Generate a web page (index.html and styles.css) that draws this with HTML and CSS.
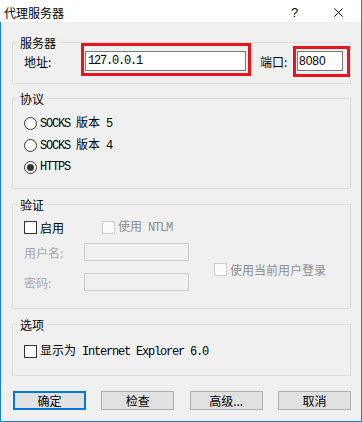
FILE: index.html
```html
<!DOCTYPE html>
<html>
<head>
<meta charset="utf-8">
<title>代理服务器</title>
<link rel="stylesheet" href="styles.css">
</head>
<body>
<div class="win">
  <div class="titlebar">
    <span class="title">代理服务器</span>
    <span class="help">?</span>
    <svg class="close" width="9" height="9" viewBox="0 0 9 9"><path d="M0.5 0.5L8.5 8.5M8.5 0.5L0.5 8.5" stroke="#000" stroke-width="1" fill="none"/></svg>
  </div>
  <div class="main">
    <fieldset class="grp g1">
      <legend>服务器</legend>
      <div class="gbody">
        <div class="row">
          <span class="lbl l-addr">地址:</span>
          <span class="field f-addr"><span class="m">127.0.0.1</span></span>
          <span class="lbl l-port">端口:</span>
          <span class="field f-port"><span class="sans">8080</span></span>
        </div>
      </div>
    </fieldset>

    <fieldset class="grp g2">
      <legend>协议</legend>
      <div class="gbody">
        <div class="opt"><span class="radio"></span><span><span class="m">SOCKS </span>版本<span class="m"> 5</span></span></div>
        <div class="opt"><span class="radio"></span><span><span class="m">SOCKS </span>版本<span class="m"> 4</span></span></div>
        <div class="opt"><span class="radio on"></span><span class="m">HTTPS</span></div>
      </div>
    </fieldset>

    <fieldset class="grp g3">
      <legend>验证</legend>
      <div class="gbody">
        <div class="row1">
          <span class="chk c-en"><span class="box"></span><span>启用</span></span>
          <span class="chk dis"><span class="box"></span><span>使用<span class="m"> NTLM</span></span></span>
        </div>
        <div class="row23">
          <div class="creds">
            <span class="lbl dis">用户名:</span>
            <span class="input dis"></span>
            <span class="lbl dis">密码:</span>
            <span class="input dis"></span>
          </div>
          <span class="chk dis c-cur"><span class="box"></span><span>使用当前用户登录</span></span>
        </div>
      </div>
    </fieldset>

    <fieldset class="grp g4">
      <legend>选项</legend>
      <div class="gbody">
        <div class="row1">
          <span class="chk"><span class="box"></span><span>显示为<span class="m"> Internet Explorer 6.0</span></span></span>
        </div>
      </div>
    </fieldset>

    <div class="btns">
      <span class="btn def">确定</span>
      <span class="btn">检查</span>
      <span class="btn">高级...</span>
      <span class="btn">取消</span>
    </div>
  </div>
</div>
</body>
</html>
```

FILE: styles.css
```css
html, body {
  margin: 0;
  padding: 0;
}
body {
  font-family: "Noto Sans CJK SC", "Noto Sans", sans-serif;
  font-size: 12px;
  line-height: 15px;
  color: #000;
  background: #f0f0f0;
}
.win {
  width: 362px;
  height: 422px;
  display: flex;
  flex-direction: column;
}
.titlebar {
  flex: none;
  height: 22px;
  box-sizing: border-box;
  padding-top: 2px;
  background: #fff;
  border-right: 1px solid #1e7fd6;
  display: flex;
  align-items: center;
}
.title {
  padding-left: 4px;
}
.help {
  margin-left: auto;
  width: 8px;
  margin-right: 35px;
  font-family: "Liberation Sans", sans-serif;
  font-size: 13px;
}
.close {
  display: block;
  margin-right: 18px;
}
.main {
  flex: 1;
  box-sizing: border-box;
  background: #f0f0f0;
  border: 1px solid #1e7fd6;
  border-top: 0;
  padding: 13px 10px 0 11px;
}
.grp {
  margin: 0;
  padding: 0;
  min-width: 0;
  border: 1px solid #dcdcdc;
}
.grp legend {
  margin-left: 4px;
  padding: 0 3px;
  line-height: 15px;
  font-size: 12px;
}
.gbody {
  padding-left: 11px;
}
.m {
  font-family: "Liberation Mono", monospace;
  font-size: 12px;
  letter-spacing: -1.2px;
  white-space: pre;
}
.sans {
  font-family: "Liberation Sans", sans-serif;
  font-size: 12px;
}

/* group 1 */
.g1 .gbody {
  padding-top: 1px;
  padding-bottom: 12px;
}
.row {
  display: flex;
  align-items: center;
  height: 20px;
}
.l-addr {
  width: 61px;
}
.l-port {
  width: 37px;
  margin-left: 14px;
}
.field {
  position: relative;
  box-sizing: border-box;
  height: 20px;
  border: 1px solid #7a7a7a;
  background: #fff;
  display: flex;
  align-items: center;
}
.field::after {
  content: "";
  position: absolute;
  border: 3px solid #e8131b;
  pointer-events: none;
}
.f-addr {
  width: 161px;
  padding-left: 2px;
}
.f-addr::after {
  left: -5px;
  right: -6px;
  top: -9px;
  bottom: -6px;
}
.f-port {
  width: 46px;
  padding-left: 1px;
}
.f-port::after {
  left: -5px;
  right: -8px;
  top: -6px;
  bottom: -7px;
}

/* group 2 */
.g2 {
  margin-top: 7px;
}
.g2 .gbody {
  padding-top: 6px;
  padding-bottom: 10px;
}
.opt {
  height: 22px;
  display: flex;
  align-items: center;
}
.radio {
  width: 13px;
  height: 13px;
  box-sizing: border-box;
  border: 1px solid #333;
  border-radius: 50%;
  background: #fff;
  margin-right: 3px;
  display: flex;
  align-items: center;
  justify-content: center;
}
.radio.on::before {
  content: "";
  width: 7px;
  height: 7px;
  border-radius: 50%;
  background: #333;
}

/* group 3 */
.g3 {
  margin-top: 8px;
}
.g3 .gbody {
  padding-top: 5px;
  padding-bottom: 17px;
}
.row1 {
  height: 20px;
  display: flex;
  align-items: center;
}
.chk {
  display: flex;
  align-items: center;
}
.chk .box {
  width: 13px;
  height: 13px;
  box-sizing: border-box;
  border: 1px solid #333;
  background: #fff;
  margin-right: 3px;
}
.chk.dis {
  color: #8c8c8c;
}
.chk.dis .box {
  border-color: #cccccc;
  background: #fcfcfc;
}
.c-en {
  width: 78px;
}
.row23 {
  display: flex;
  margin-top: 6px;
}
.creds {
  display: grid;
  grid-template-columns: 60px 105px;
  grid-auto-rows: 18px;
  row-gap: 12px;
  align-items: center;
}
.lbl.dis {
  color: #a6a6a6;
}
.input {
  height: 18px;
  box-sizing: border-box;
  border: 1px solid #cccccc;
  background: #f0f0f0;
}
.c-cur {
  align-self: flex-start;
  margin-top: 20px;
  margin-left: 25px;
  height: 13px;
}

/* group 4 */
.g4 {
  margin-top: 8px;
}
.g4 .gbody {
  padding-top: 9px;
  padding-bottom: 14px;
}

/* buttons */
.btns {
  display: flex;
  justify-content: space-between;
  margin: 15px 0 0 1px;
}
.btn {
  width: 73px;
  height: 19px;
  box-sizing: border-box;
  border: 1px solid #adadad;
  background: #e1e1e1;
  display: flex;
  align-items: center;
  justify-content: center;
}
.btn.def {
  border: 2px solid #0078d7;
}
```
